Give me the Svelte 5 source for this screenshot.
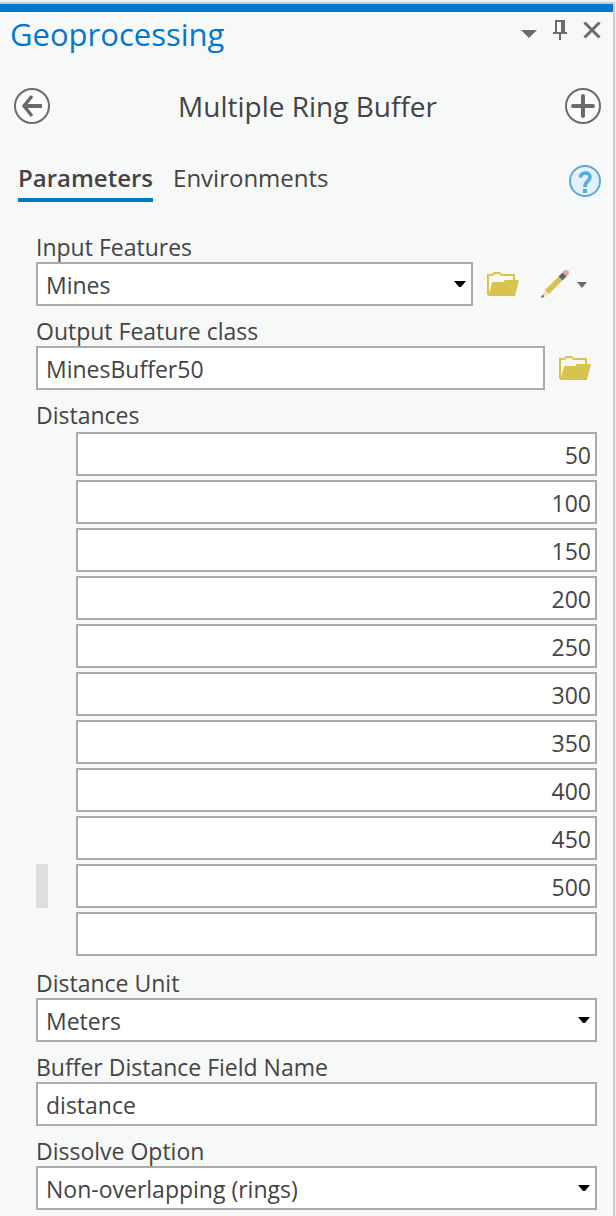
<script>
  let distances = $state(['50', '100', '150', '200', '250', '300', '350', '400', '450', '500', '']);
  let activeRow = $state(9);
  let inputFeatures = $state('Mines');
  let outputClass = $state('MinesBuffer50');
  let unit = $state('Meters');
  let fieldName = $state('distance');
  let dissolve = $state('Non-overlapping (rings)');
</script>

{#snippet folder()}
  <svg width="32" height="26" viewBox="0 0 32 26" aria-hidden="true">
    <path d="M1 24V4H5.500L7.500 2H12.500L15 4H27V10" fill="none" stroke="#d8c44c" stroke-width="2" />
    <path d="M1 25L5.500 11H16L18 9H32L28 25Z" fill="#d8c44c" />
  </svg>
{/snippet}

{#snippet caret()}
  <svg class="caret" width="12" height="6" viewBox="0 0 12 6" aria-hidden="true">
    <path d="M0 0H12L7 6H5Z" fill="#000" />
  </svg>
{/snippet}

<div class="window">
  <main class="pane">
    <header class="titlebar">
      <h1>Geoprocessing</h1>
      <div class="window-buttons">
        <button aria-label="Pane options">
          <svg width="16" height="24" viewBox="0 0 16 24"><path d="M0 12H16L8 20Z" fill="#6b6b6b" /></svg>
        </button>
        <button aria-label="Auto hide">
          <svg width="14" height="24" viewBox="0 0 14 24" fill="#6b6b6b">
            <path d="M2 2H12V14H14V16H8V22H6V16H0V14H2ZM4 4V14H8V4Z" fill-rule="evenodd" />
          </svg>
        </button>
        <button aria-label="Close">
          <svg width="18" height="24" viewBox="0 0 18 24">
            <path d="M1.500 4.500L16.500 19.500M16.500 4.500L1.500 19.500" stroke="#6b6b6b" stroke-width="3" />
          </svg>
        </button>
      </div>
    </header>

    <div class="toolbar">
      <button aria-label="Back">
        <svg width="36" height="36" viewBox="0 0 36 36" fill="none" stroke="#6b6b6b">
          <circle cx="18" cy="18" r="17" fill="#fbfcfc" stroke-width="2" />
          <path d="M10 18H28" stroke-width="4" />
          <path d="M18 8L10 18L18 28" stroke-width="3.400" />
        </svg>
      </button>
      <h2>Multiple Ring Buffer</h2>
      <button aria-label="Add">
        <svg width="36" height="36" viewBox="0 0 36 36" fill="none" stroke="#6b6b6b">
          <circle cx="18" cy="18" r="17" fill="#fbfcfc" stroke-width="2" />
          <path d="M8 18H28M18 8V28" stroke-width="4" stroke-linecap="round" />
        </svg>
      </button>
    </div>

    <nav class="tabs">
      <button class="tab selected">Parameters</button>
      <button class="tab">Environments</button>
      <button class="help" aria-label="Help">
        <svg width="32" height="32" viewBox="0 0 32 32">
          <circle cx="16" cy="16" r="15" fill="#e3f0fb" stroke="#58a9dc" stroke-width="2" />
          <path d="M11.500 12.500C11.500 6.500 21 6.500 21 12C21 16.500 16 16 16 22" fill="none" stroke="#58a9dc" stroke-width="3.600" />
          <path d="M14 24H18V28H14Z" fill="#58a9dc" />
        </svg>
      </button>
    </nav>

    <form class="form">
      <div class="field">
        <label for="input-features">Input Features</label>
        <div class="line">
          <div class="select">
            <select id="input-features" bind:value={inputFeatures}><option>Mines</option></select>
            {@render caret()}
          </div>
          <button type="button" class="browse" aria-label="Browse input features">{@render folder()}</button>
          <button type="button" class="edit" aria-label="Draw features">
            <svg width="46" height="28" viewBox="0 0 46 28">
              <circle cx="25" cy="3" r="3" fill="#e9a597" />
              <path d="M1.500 25.500L4 20L8 24L3 26.500Z" fill="#fadcc0" />
              <path d="M0 28L1.500 24.500L3.500 26.500Z" fill="#555" />
              <path d="M4 20L17.500 6.500L21.500 10.500L8 24Z" fill="#d8c44c" />
              <path d="M17.500 6.500L21.500 2.500L25.500 6.500L21.500 10.500Z" fill="#666" />
              <path d="M36 12H46L41 18Z" fill="#6b6b6b" />
            </svg>
          </button>
        </div>
      </div>

      <div class="field">
        <label for="output-class">Output Feature class</label>
        <div class="line">
          <input id="output-class" type="text" bind:value={outputClass} />
          <button type="button" class="browse" aria-label="Browse output feature class">{@render folder()}</button>
        </div>
      </div>

      <div class="field" role="group" aria-labelledby="distances-label">
        <span class="label" id="distances-label">Distances</span>
        <div class="distances">
          {#each distances as _, i}
            <div class="distance" class:active={i === activeRow}>
              <span class="grip"></span>
              <input type="text" aria-label={`Distance ${i + 1}`} bind:value={distances[i]} onfocus={() => (activeRow = i)} />
            </div>
          {/each}
        </div>
      </div>

      <div class="field">
        <label for="unit">Distance Unit</label>
        <div class="select">
          <select id="unit" bind:value={unit}><option>Meters</option></select>
          {@render caret()}
        </div>
      </div>

      <div class="field">
        <label for="field-name">Buffer Distance Field Name</label>
        <input id="field-name" type="text" bind:value={fieldName} />
      </div>

      <div class="field">
        <label for="dissolve">Dissolve Option</label>
        <div class="select">
          <select id="dissolve" bind:value={dissolve}><option>Non-overlapping (rings)</option></select>
          {@render caret()}
        </div>
      </div>
    </form>
  </main>
</div>

<style>
  :global(body) {
    background: #f0f0f0;
  }

  .window {
    padding: 2px 1px 0 0;
  }

  .pane {
    min-height: calc(100vh - 2px);
    box-sizing: border-box;
    border: solid #ccc;
    border-width: 2px 2px 0 0;
    background: #f7f9f8;
    color: #444;
    font: 23px/28px "Open Sans", "Noto Sans", sans-serif;
  }

  button {
    display: flex;
    padding: 0;
    border: 0;
    background: none;
    color: inherit;
    font: inherit;
    cursor: pointer;
  }

  svg {
    display: block;
  }

  h1,
  h2 {
    margin: 0;
    font-weight: 400;
  }

  .titlebar {
    display: flex;
    justify-content: space-between;
    align-items: flex-start;
    padding: 0 12px 0 10px;
    border-top: 8px solid #0078d0;
  }

  h1 {
    color: #0078d0;
    font-size: 31px;
    line-height: 44px;
  }

  .window-buttons {
    display: flex;
    gap: 16px;
    padding-top: 6px;
  }

  .toolbar {
    display: flex;
    justify-content: space-between;
    align-items: center;
    padding: 30px 12px 30px 14px;
  }

  h2 {
    font-size: 28px;
    line-height: 40px;
  }

  .tabs {
    display: flex;
    align-items: center;
    gap: 20px;
    padding: 0 12px 0 18px;
  }

  .tab {
    padding: 6px 0 4px;
    border-bottom: 4px solid transparent;
    font-size: 24px;
    line-height: 32px;
  }

  .selected {
    border-color: #007ac2;
    font-weight: 600;
  }

  .help {
    margin-left: auto;
    padding-top: 4px;
  }

  .form {
    display: flex;
    flex-direction: column;
    gap: 12px;
    padding: 32px 16px 6px 36px;
  }

  .field {
    display: flex;
    flex-direction: column;
  }

  label,
  .label {
    padding-bottom: 2px;
    line-height: 26px;
  }

  .line {
    display: flex;
    align-items: center;
  }

  .line > input,
  .line > .select {
    flex: 1;
  }

  input,
  select {
    width: 100%;
    min-width: 0;
    height: 44px;
    box-sizing: border-box;
    margin: 0;
    padding: 2px 8px 0;
    border: 2px solid #aaa;
    border-radius: 0;
    outline: 0;
    background: #fff;
    color: inherit;
    font: inherit;
    line-height: 36px;
    appearance: none;
  }

  .select {
    display: grid;
    align-items: center;
  }

  .select > :global(*) {
    grid-area: 1 / 1;
  }

  .caret {
    justify-self: end;
    margin-right: 7px;
    pointer-events: none;
  }

  .browse {
    margin: 0 6px 0 14px;
  }

  .edit {
    margin: 0 10px 0 16px;
  }

  .distances {
    display: flex;
    flex-direction: column;
    gap: 4px;
    padding: 2px 0;
  }

  .distance {
    display: flex;
    gap: 28px;
  }

  .distance input {
    padding: 2px 4px 0;
    text-align: right;
  }

  .grip {
    flex: none;
    width: 12px;
  }

  .active .grip {
    background: #dedede;
  }
</style>
